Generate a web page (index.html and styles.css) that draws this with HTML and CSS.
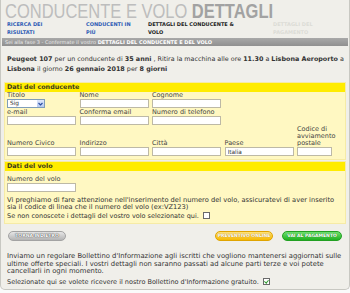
FILE: index.html
```html
<!DOCTYPE html>
<html lang="it">
<head>
    <meta charset="UTF-8">
    <meta name="viewport" content="width=device-width, initial-scale=1.0">
    <title>Conducente e volo dettagli</title>
    <link rel="stylesheet" href="styles.css">
</head>
<body>
<div class="page">
    <h1 class="title"><span class="title-text">CONDUCENTE E VOLO <b>DETTAGLI</b></span></h1>

    <ul class="steps">
        <li class="done">Ricerca dei<br>risultati</li>
        <li class="done">Conducenti in<br>più</li>
        <li class="current">Dettagli del conducente &amp;<br>volo</li>
        <li class="todo">Dettagli del<br>pagamento</li>
    </ul>

    <div class="phase">Sei alla fase 3 - Confermate il vostro <b>DETTAGLI DEL CONDUCENTE E DEL VOLO</b></div>

    <p class="summary"><b>Peugeot 107</b> per un conducente di <b>35 anni</b> , Ritira la macchina alle ore <b>11.30</b> a <b>Lisbona Aeroporto</b> a <b>Lisbona</b> il giorno <b>26 gennaio 2018</b> per <b>8 giorni</b></p>

    <section class="panel">
        <h2>Dati del conducente</h2>
        <div class="panel-body driver">
            <div class="row">
                <div class="field">
                    <label for="titolo">Titolo</label>
                    <div class="select">
                        <select id="titolo">
                            <option>Sig</option>
                            <option>Sig.ra</option>
                        </select>
                        <span class="arrow"><svg width="5" height="4" viewBox="0 0 5 4"><path d="M0.5 1 L2.5 3 L4.5 1" fill="none" stroke="#2b4ea0" stroke-width="1.2"/></svg></span>
                    </div>
                </div>
                <div class="field">
                    <label for="nome">Nome</label>
                    <input type="text" id="nome">
                </div>
                <div class="field">
                    <label for="cognome">Cognome</label>
                    <input type="text" id="cognome">
                </div>
            </div>
            <div class="row">
                <div class="field">
                    <label for="email">e-mail</label>
                    <input type="text" id="email">
                </div>
                <div class="field">
                    <label for="email2">Conferma email</label>
                    <input type="text" id="email2">
                </div>
                <div class="field">
                    <label for="telefono">Numero di telefono</label>
                    <input type="text" id="telefono">
                </div>
            </div>
            <div class="row">
                <div class="field">
                    <label for="civico">Numero Civico</label>
                    <input type="text" id="civico">
                </div>
                <div class="field">
                    <label for="indirizzo">Indirizzo</label>
                    <input type="text" id="indirizzo">
                </div>
                <div class="field">
                    <label for="citta">Città</label>
                    <input type="text" id="citta">
                </div>
                <div class="field">
                    <label for="paese">Paese</label>
                    <input type="text" id="paese" value="Italia">
                </div>
                <div class="field">
                    <label for="cap">Codice di<br>avviamento<br>postale</label>
                    <input type="text" id="cap" class="short">
                </div>
            </div>
        </div>
    </section>

    <section class="panel">
        <h2>Dati del volo</h2>
        <div class="panel-body flight">
            <div class="field">
                <label for="volo">Numero del volo</label>
                <input type="text" id="volo">
            </div>
            <p class="note">Vi preghiamo di fare attenzione nell'inserimento del numero del volo, assicuratevi di aver inserito sia il codice di linea che il numero del volo (ex:VZ123)</p>
            <p class="check-line">Se non conoscete i dettagli del vostro volo selezionate qui. <input type="checkbox"></p>
        </div>
    </section>

    <div class="actions">
        <button class="btn btn-back">TORNA INDIETRO</button>
        <div class="actions-right">
            <button class="btn btn-quote">PREVENTIVO ONLINE</button>
            <button class="btn btn-pay">VAI AL PAGAMENTO</button>
        </div>
    </div>

    <p class="newsletter">Inviamo un regolare Bollettino d'Informazione agli iscritti che vogliono mantenersi aggiornati sulle ultime offerte speciali. I vostri dettagli non saranno passati ad alcune parti terze e voi potete cancellarli in ogni momento.</p>
    <p class="newsletter check-line">Selezionate qui se volete ricevere il nostro Bollettino d'Informazione gratuito. <input type="checkbox" checked></p>
</div>
</body>
</html>
```

FILE: styles.css
```css
body {
    margin: 0;
    background-color: #fafafa;
    font-family: 'DejaVu Sans', Verdana, sans-serif;
    font-size: 6.5px;
    color: #333;
}
.page {
    width: 348px;
    height: 289px;
    border: 1px solid #c8c8c2;
    border-top: none;
    border-radius: 0 0 5px 5px;
    background-color: #f0efea;
    overflow: hidden;
}
.title {
    margin: 0;
    padding: 1px 0 0 4px;
    height: 19px;
    line-height: 19px;
    font-family: 'Liberation Sans', Arial, sans-serif;
    font-size: 21px;
    font-weight: normal;
    color: #bdbdbd;
    white-space: nowrap;
}
.title-text {
    display: inline-block;
    transform: scaleX(0.785);
    transform-origin: left center;
}
.title b {
    color: #a2a2a2;
}
.steps {
    display: grid;
    grid-template-columns: 79px 62px 123px 1fr;
    margin: 0;
    padding: 0 0 0 6px;
    list-style: none;
    height: 16px;
    font-size: 5px;
    line-height: 8px;
    font-weight: bold;
    text-transform: uppercase;
}
.steps .done {
    color: #2f5db5;
}
.steps .current {
    color: #1e1e1e;
}
.steps .todo {
    color: #dcdcd6;
    padding-left: 2px;
}
.phase {
    margin: 2px 1px 0;
    height: 8px;
    line-height: 8px;
    padding-left: 3px;
    background: linear-gradient(#a9a9a9, #909090);
    color: #ececec;
    font-size: 5px;
    white-space: nowrap;
}
.phase b {
    color: #fff;
}
.summary {
    margin: 0 0 8px;
    padding: 8px 4px 0 6px;
    font-size: 6.4px;
    line-height: 10px;
}
.panel {
    margin: 0 3px 1px;
    background-color: #fff8c2;
    border: 1px solid #f6eba6;
}
.panel h2 {
    margin: 0;
    height: 9px;
    line-height: 9px;
    padding-left: 2px;
    background-color: #ffec00;
    font-size: 6.4px;
    color: #3b3a1c;
}
.panel-body {
    padding: 0 2px 3px;
}
.driver .row {
    display: grid;
    grid-template-columns: repeat(5, 72.5px);
    align-items: end;
    margin-bottom: 1px;
}
.driver .row:last-child {
    margin-bottom: 0;
}
.field label {
    display: block;
    line-height: 7px;
    color: #444;
}
.field input {
    display: block;
    width: 69px;
    height: 9px;
    box-sizing: border-box;
    margin: 0;
    padding: 0 2px;
    border: 1px solid #bdb9a6;
    background-color: #fff;
    font: inherit;
    font-size: 5.8px;
    color: #333;
}
.field input.short {
    width: 35px;
}
.select {
    position: relative;
    width: 38px;
    height: 9px;
}
.select select {
    appearance: none;
    width: 100%;
    height: 100%;
    margin: 0;
    padding: 0 0 0 2px;
    border: 1px solid #7f9db9;
    background-color: #fff;
    font: inherit;
    font-size: 5.8px;
    line-height: 7px;
    color: #333;
}
.select .arrow {
    position: absolute;
    top: 1px;
    right: 1px;
    width: 7px;
    height: 7px;
    display: flex;
    align-items: center;
    justify-content: center;
    background: linear-gradient(#dfe8fb, #b5c9f2);
    pointer-events: none;
}
.flight {
    padding-top: 5px;
    padding-bottom: 3px;
}
.note {
    margin: 5px 0 0;
    padding-right: 4px;
    font-size: 6.7px;
    line-height: 7px;
}
.check-line {
    margin: 1px 0 0;
    line-height: 8px;
}
input[type="checkbox"] {
    appearance: none;
    position: relative;
    width: 7px;
    height: 7px;
    margin: 0 0 0 2px;
    vertical-align: -1px;
    border: 1px solid #6a6a6a;
    background-color: #fff;
}
input[type="checkbox"]:checked::after {
    content: "";
    position: absolute;
    left: 1.5px;
    top: 0;
    width: 1.5px;
    height: 3px;
    border: solid #2c9a2c;
    border-width: 0 1px 1px 0;
    transform: rotate(40deg);
}
.actions {
    display: flex;
    justify-content: space-between;
    margin: 7px 7px 0;
}
.actions-right {
    display: flex;
    gap: 9px;
}
.btn {
    height: 10px;
    padding: 0;
    border-radius: 5px;
    font-family: 'DejaVu Sans', Verdana, sans-serif;
    font-size: 4.5px;
    font-weight: bold;
    line-height: 8px;
    white-space: nowrap;
    color: #fff;
    cursor: pointer;
}
.btn-back {
    width: 58px;
    border: 1px solid #a3a3a3;
    background: linear-gradient(#e6e6e6, #b4b4b4);
    text-shadow: 0 0 1px #444, 0 0 1px #444;
}
.btn-quote {
    width: 58px;
    border: 1px solid #e0a400;
    background: linear-gradient(#ffe37a, #f7b900);
    text-shadow: 0 0 1px #9c6c00;
}
.btn-pay {
    width: 60px;
    border: 1px solid #22a022;
    background: linear-gradient(#6fe06f, #1fb01f);
    text-shadow: 0 0 1px #0d6d0d;
}
.newsletter {
    margin: 12px 0 0;
    padding: 0 6px;
    font-size: 6.8px;
    line-height: 7.5px;
}
.newsletter.check-line {
    margin-top: 2.5px;
    font-size: 6.5px;
    line-height: 8px;
}
```
